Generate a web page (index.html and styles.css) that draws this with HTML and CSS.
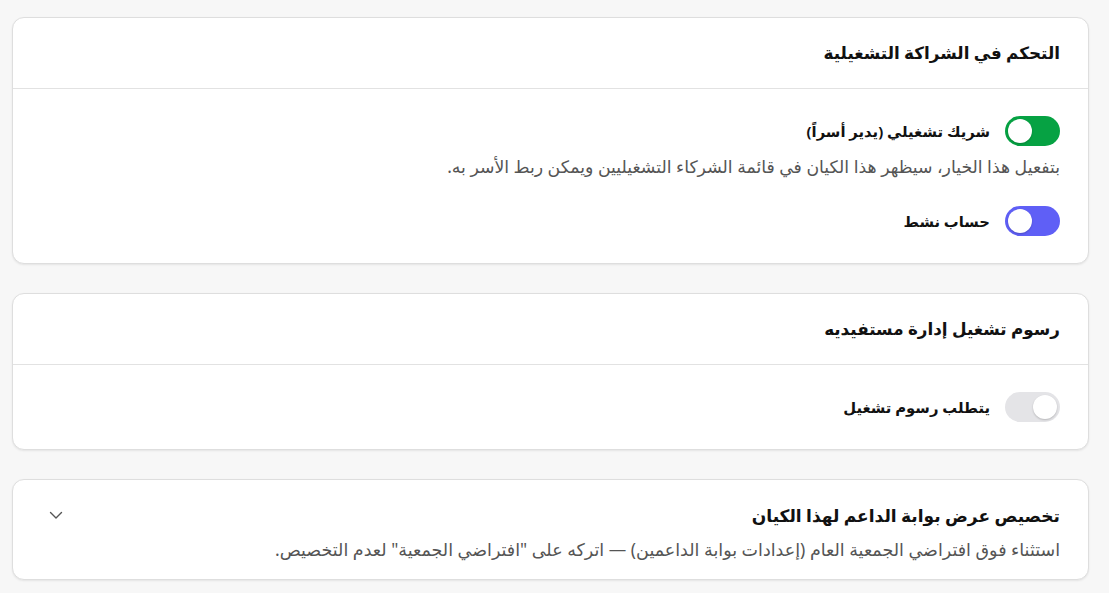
FILE: index.html
```html
<!DOCTYPE html>
<html lang="ar" dir="rtl">
<head>
<meta charset="utf-8">
<link rel="stylesheet" href="styles.css">
</head>
<body>
<main class="page">
  <section class="card">
    <header class="card-head"><h2 class="card-title">التحكم في الشراكة التشغيلية</h2></header>
    <div class="card-body">
      <div class="field">
        <label class="row"><span class="toggle toggle-green"><span class="knob"></span></span><span class="label">شريك تشغيلي (يدير أسراً)</span></label>
        <p class="hint">بتفعيل هذا الخيار، سيظهر هذا الكيان في قائمة الشركاء التشغيليين ويمكن ربط الأسر به.</p>
      </div>
      <label class="row"><span class="toggle toggle-purple"><span class="knob"></span></span><span class="label">حساب نشط</span></label>
    </div>
  </section>

  <section class="card">
    <header class="card-head"><h2 class="card-title">رسوم تشغيل إدارة مستفيديه</h2></header>
    <div class="card-body">
      <label class="row"><span class="toggle toggle-off"><span class="knob"></span></span><span class="label">يتطلب رسوم تشغيل</span></label>
    </div>
  </section>

  <section class="card card-collapse">
    <div class="collapse-text">
      <h2 class="collapse-title">تخصيص عرض بوابة الداعم لهذا الكيان</h2>
      <p class="collapse-hint">استثناء فوق افتراضي الجمعية العام (إعدادات بوابة الداعمين) — اتركه على "افتراضي الجمعية" لعدم التخصيص.</p>
    </div>
    <svg class="chevron" width="16" height="16" viewBox="0 0 16 16" fill="none" stroke="#555" stroke-width="1.4" stroke-linecap="round" stroke-linejoin="round"><path d="M2.5 5.5l5.5 5.5 5.5-5.5"/></svg>
  </section>
</main>
</body>
</html>
```
FILE: styles.css
```css
* { box-sizing: border-box; }
html, body { margin: 0; padding: 0; }
body {
  background: #f7f7f7;
  font-family: "Noto Sans", "DejaVu Sans", sans-serif;
  color: #111;
}
.page {
  padding: 17px 20px 12px 12px;
  display: flex;
  flex-direction: column;
  gap: 29px;
}
.card {
  background: #fff;
  border: 1px solid #dedede;
  border-radius: 12px;
  box-shadow: 0 1px 2px rgba(0,0,0,0.08);
}
.card-head {
  height: 71px;
  padding: 0 28px;
  display: flex;
  align-items: center;
  border-bottom: 1px solid #e2e2e2;
}
.card-title {
  margin: 0;
  font-size: 16.8px;
  line-height: 24px;
  font-weight: 700;
}
.card-body {
  padding: 27px 28px 27px;
  display: flex;
  flex-direction: column;
  gap: 29px;
}
.row {
  display: flex;
  align-items: center;
  gap: 15px;
}
.label {
  font-size: 14.8px;
  line-height: 22px;
  font-weight: 700;
}
.hint {
  margin: 11px 0 0;
  font-size: 17.3px;
  line-height: 20px;
  color: #555;
}
.toggle {
  width: 55px;
  height: 30px;
  border-radius: 15px;
  display: flex;
  align-items: center;
  padding: 0 3px;
  flex: none;
}
.toggle-green { background: #06a243; justify-content: flex-end; }
.toggle-purple { background: #5f5ff6; justify-content: flex-end; }
.toggle-off { background: #e4e4e7; justify-content: flex-start; }
.knob {
  width: 24px;
  height: 24px;
  border-radius: 50%;
  background: #fff;
  box-shadow: 0 1px 2px rgba(0,0,0,0.2);
}
.card-collapse {
  display: flex;
  align-items: flex-start;
  justify-content: space-between;
  padding: 23px 28px 18px 35px;
}
.collapse-title {
  margin: 0;
  font-size: 17px;
  line-height: 26px;
  font-weight: 600;
}
.collapse-hint {
  margin: 8px 0 0;
  font-size: 17.5px;
  line-height: 24px;
  color: #555;
}
.chevron { margin-top: 4px; }
```
